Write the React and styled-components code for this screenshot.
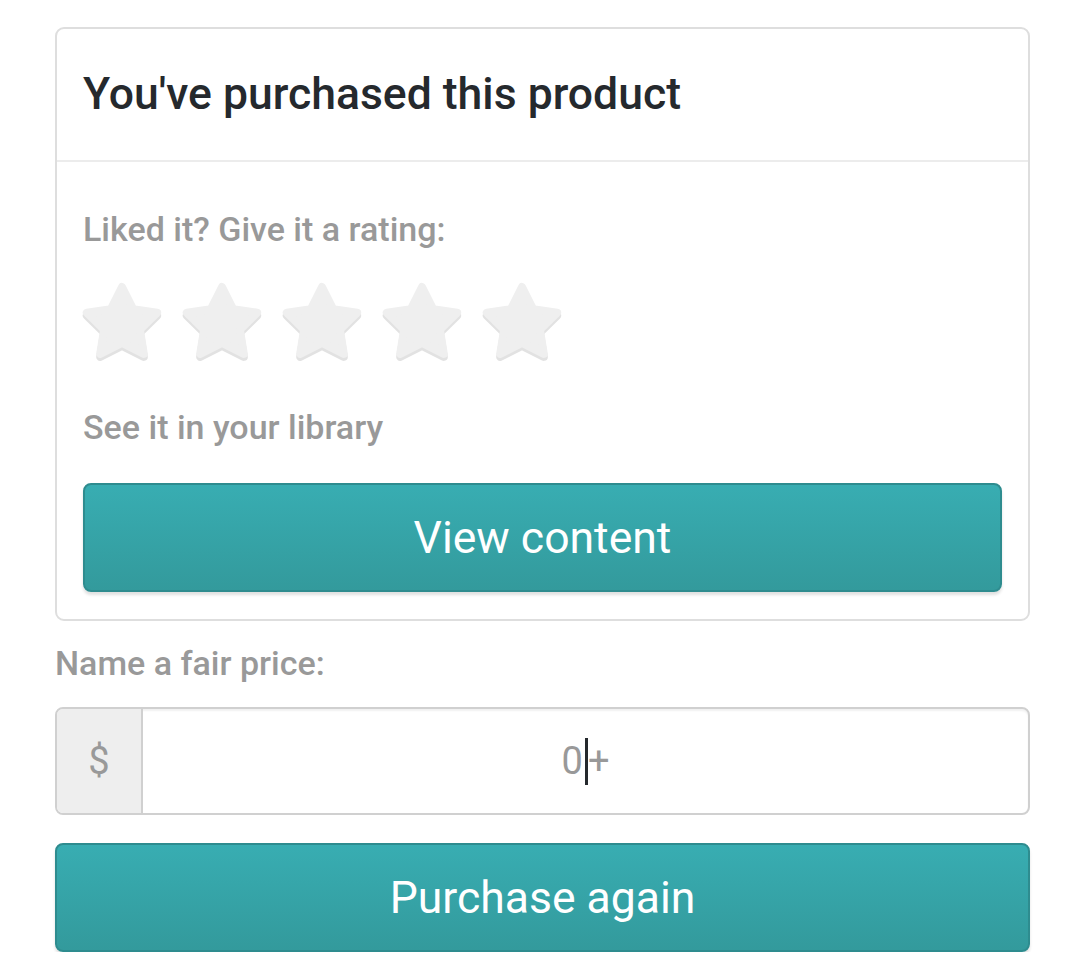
import React from 'react';
import styled, { createGlobalStyle } from 'styled-components';

const GlobalStyle = createGlobalStyle`
  html, body {
    margin: 0;
    padding: 0;
    background: #fff;
    font-family: Roboto, "Liberation Sans", sans-serif;
  }
  * { box-sizing: border-box; }
`;

const Page = styled.div`
  width: 1080px;
  padding: 27px 50px 0 55px;
  display: flex;
  flex-direction: column;
`;

const Card = styled.section`
  border: 2px solid #dedede;
  border-radius: 9px;
  background: #fff;
`;

const CardHeader = styled.header`
  height: 133px;
  padding: 0 26px;
  display: flex;
  align-items: center;
  border-bottom: 2px solid #ececec;
`;

const Title = styled.h2`
  margin: 0;
  font-size: 44.5px;
  font-weight: 500;
  color: #25292d;
  line-height: 1;
`;

const CardBody = styled.div`
  padding: 47px 26px 27px;
  display: flex;
  flex-direction: column;
`;

const Label = styled.div`
  font-size: 34px;
  font-weight: 500;
  color: #999;
  line-height: 40px;
`;

const Stars = styled.div`
  display: flex;
  gap: 18px;
  margin: 33px 0 43px -2px;
`;

const StarButton = styled.button`
  width: 82px;
  height: 82px;
  padding: 0;
  border: 0;
  background: none;
  cursor: pointer;
  display: block;
`;

const Button = styled.button`
  width: 100%;
  height: 109px;
  padding: 0;
  border: 2px solid #2e8c8f;
  border-radius: 8px;
  background: linear-gradient(180deg, #38adb2 0%, #339a9c 100%);
  box-shadow: 0 3px 3px rgba(0, 0, 0, 0.12);
  color: #fff;
  font-family: Roboto, "Liberation Sans", sans-serif;
  font-size: 44.5px;
  font-weight: 400;
  cursor: pointer;
`;

const LibraryLabel = styled(Label)`
  margin-bottom: 36px;
`;

const PriceLabel = styled(Label)`
  margin: 22px 0 24px;
`;

const InputGroup = styled.div`
  display: flex;
  height: 108px;
  border: 2px solid #d0d0d0;
  border-radius: 8px;
  overflow: hidden;
  box-shadow: inset 0 2px 2px rgba(0, 0, 0, 0.06);
  margin-bottom: 28px;
`;

const Addon = styled.div`
  width: 86px;
  background: #eee;
  border-right: 2px solid #d0d0d0;
  display: flex;
  align-items: center;
  justify-content: center;
  font-size: 38px;
  color: #999;
`;

const PriceInput = styled.div`
  flex: 1;
  display: flex;
  align-items: center;
  justify-content: center;
  font-size: 38px;
  color: #999;
`;

const Caret = styled.span`
  display: inline-block;
  width: 3px;
  height: 47px;
  background: #25292d;
  margin: 0 0 0 2px;
`;

const STAR_PATH =
  'M41 5 L52.2 27.3 L76.2 30.6 L58.9 47.7 L62.8 71.9 L41 61 L19.2 71.9 L23.1 47.7 L5.8 30.6 L29.8 27.3 Z';

const Star = () => (
  <svg viewBox="0 0 82 82" width="82" height="82">
    <path
      d={STAR_PATH}
      fill="#e2e2e2"
      stroke="#e2e2e2"
      strokeWidth="8"
      strokeLinejoin="round"
      transform="translate(0 3)"
    />
    <path d={STAR_PATH} fill="#efefef" stroke="#efefef" strokeWidth="8" strokeLinejoin="round" />
  </svg>
);

export default function App() {
  return (
    <>
      <GlobalStyle />
      <Page>
        <Card>
          <CardHeader>
            <Title>You've purchased this product</Title>
          </CardHeader>
          <CardBody>
            <Label>Liked it? Give it a rating:</Label>
            <Stars>
              {[1, 2, 3, 4, 5].map(n => (
                <StarButton key={n} aria-label={`${n} stars`}>
                  <Star />
                </StarButton>
              ))}
            </Stars>
            <LibraryLabel>See it in your library</LibraryLabel>
            <Button>View content</Button>
          </CardBody>
        </Card>
        <PriceLabel>Name a fair price:</PriceLabel>
        <InputGroup>
          <Addon>$</Addon>
          <PriceInput>
            0<Caret />+
          </PriceInput>
        </InputGroup>
        <Button>Purchase again</Button>
      </Page>
    </>
  );
}
